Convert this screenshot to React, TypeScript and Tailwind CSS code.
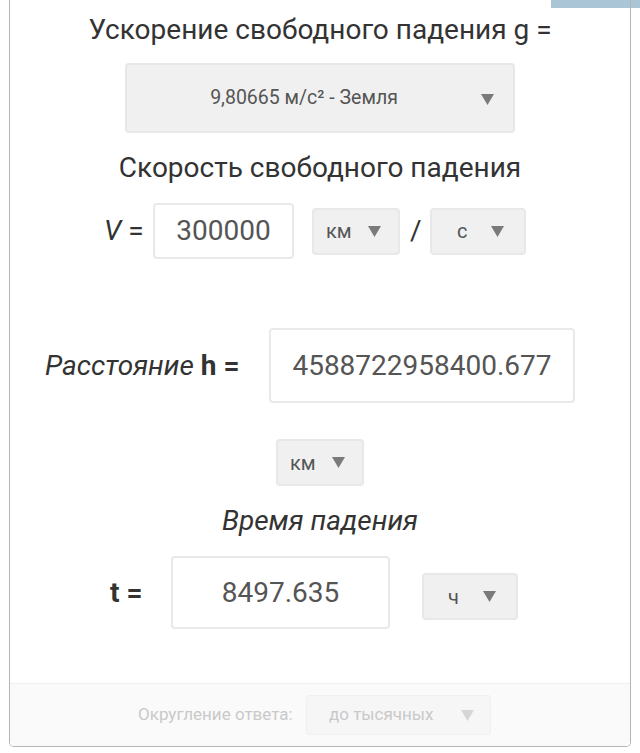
import React from "react";

function Arrow({ className = "" }: { className?: string }) {
  return (
    <svg width="13" height="11" viewBox="0 0 13 11" className={className}>
      <path d="M0 0 L13 0 L6.5 11 Z" fill="currentColor" />
    </svg>
  );
}

export default function App() {
  return (
    <div
      className="relative w-[640px] h-[753px] bg-white overflow-hidden"
      style={{ fontFamily: "Roboto, 'Noto Sans', sans-serif" }}
    >
      <div className="absolute right-0 top-0 w-[89px] h-[8px] bg-[#a9c5d6]" />
      <div className="relative px-[9px]">
        <div className="border-x-[1.5px] border-b-[1.5px] border-[#b4b4b4] rounded-b-[5px] flex flex-col">
          <div className="h-[60px] flex items-center justify-center text-[28px] text-[#333]">
            Ускорение свободного падения g =
          </div>
          <div className="mt-[3px] self-center w-[390px] h-[70px] bg-[#f0f0f0] border-2 border-[#e8e8e8] rounded-[4px] relative flex items-center justify-center text-[19.5px] text-[#555]">
            <span className="-ml-[32px]">9,80665 м/с² - Земля</span>
            <Arrow className="absolute right-[19px] top-[29px] text-[#7a7a7a]" />
          </div>
          <div className="h-[70px] flex items-center justify-center text-[28px] text-[#333]">
            Скорость свободного падения
          </div>
          <div className="h-[56px] flex items-center pl-[94px]">
            <span className="text-[28px] text-[#333] w-[49px]">
              <i>V</i> =
            </span>
            <div className="w-[141px] h-[56px] border-2 border-[#e9e9e9] rounded-[4px] bg-white flex items-center justify-center text-[28px] text-[#555]">
              300000
            </div>
            <div className="ml-[18px] w-[88px] h-[47px] bg-[#f0f0f0] border-2 border-[#e8e8e8] rounded-[4px] flex items-center pl-[12px] gap-[16px] text-[20px] text-[#555]">
              <span>км</span>
              <Arrow className="text-[#7a7a7a]" />
            </div>
            <span className="ml-[10px] w-[20px] text-[28px] text-[#333]">/</span>
            <div className="w-[96px] h-[47px] bg-[#f0f0f0] border-2 border-[#e8e8e8] rounded-[4px] flex items-center pl-[25px] gap-[24px] text-[20px] text-[#555]">
              <span>с</span>
              <Arrow className="text-[#7a7a7a]" />
            </div>
          </div>
          <div className="mt-[69px] h-[75px] flex items-center pl-[35px]">
            <span className="text-[28px] text-[#333] w-[224px]">
              <i>Расстояние</i> <b>h =</b>
            </span>
            <div className="w-[306px] h-[75px] border-2 border-[#e9e9e9] rounded-[4px] bg-white flex items-center justify-center text-[28px] text-[#555]">
              4588722958400.677
            </div>
          </div>
          <div className="mt-[36px] self-center w-[88px] h-[47px] bg-[#f0f0f0] border-2 border-[#e8e8e8] rounded-[4px] flex items-center pl-[12px] gap-[16px] text-[20px] text-[#555]">
            <span>км</span>
            <Arrow className="text-[#7a7a7a]" />
          </div>
          <div className="h-[70px] flex items-center justify-center text-[28px] text-[#333]">
            <i>Время падения</i>
          </div>
          <div className="h-[73px] flex items-start pl-[100px]">
            <span className="h-[73px] flex items-center text-[28px] text-[#333] w-[61px]">
              <b>t =</b>
            </span>
            <div className="w-[219px] h-[73px] border-2 border-[#e9e9e9] rounded-[4px] bg-white flex items-center justify-center text-[28px] text-[#555]">
              8497.635
            </div>
            <div className="ml-[32px] mt-[17px] w-[96px] h-[47px] bg-[#f0f0f0] border-2 border-[#e8e8e8] rounded-[4px] flex items-center pl-[24px] gap-[24px] text-[20px] text-[#555]">
              <span>ч</span>
              <Arrow className="text-[#7a7a7a]" />
            </div>
          </div>
          <div className="mt-[54px] h-[63px] bg-[#fafafa] border-t border-[#f0f0f0] rounded-b-[4px] flex items-center pl-[128px]">
            <span className="text-[17px] text-[#c9c9c9] w-[168px]">Округление ответа:</span>
            <div className="w-[185px] h-[40px] bg-[#f6f6f6] border border-[#f0f0f0] rounded-[3px] flex items-center pl-[22px] text-[17px] text-[#c9c9c9]">
              <span className="w-[132px]">до тысячных</span>
              <Arrow className="text-[#d6d6d6]" />
            </div>
          </div>
        </div>
      </div>
    </div>
  );
}
